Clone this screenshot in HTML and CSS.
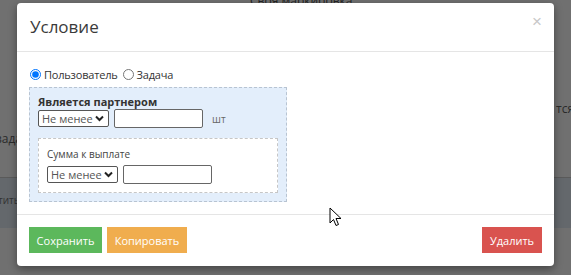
FILE: index.html
```html
<!DOCTYPE html>
<html lang="ru">
<head>
  <meta charset="UTF-8">
  <title>Условие</title>
  <link rel="stylesheet" href="styles.css">
</head>
<body>
  <!-- page behind the modal -->
  <div class="backdrop">
    <div class="bg-top">Своя маркировка</div>
    <div class="bg-left">задач</div>
    <div class="bg-right">тся</div>
    <div class="bg-row"><span>тить</span></div>
  </div>

  <div class="modal">
    <div class="modal-header">
      <h2>Условие</h2>
      <button class="close-button">×</button>
    </div>

    <div class="modal-body">
      <div class="type-switch">
        <label><input type="radio" name="type" checked> Пользователь</label>
        <label><input type="radio" name="type"> Задача</label>
      </div>

      <div class="condition-box">
        <div class="condition-title">Является партнером</div>
        <div class="condition-row">
          <select><option>Не менее</option></select>
          <input type="text">
          <span class="unit">шт</span>
        </div>

        <div class="sub-condition">
          <div class="sub-title">Сумма к выплате</div>
          <div class="condition-row">
            <select><option>Не менее</option></select>
            <input type="text">
          </div>
        </div>
      </div>
    </div>

    <div class="modal-footer">
      <button class="btn btn-save">Сохранить</button>
      <button class="btn btn-copy">Копировать</button>
      <button class="btn btn-delete">Удалить</button>
    </div>
  </div>

  <svg class="cursor" width="13" height="20" viewBox="0 0 13 20">
    <path d="M1 1 L1 16 L4.5 12.5 L7 18.5 L9.5 17.5 L7 11.5 L12 11.5 Z" fill="#fff" stroke="#000" stroke-width="1"/>
  </svg>
</body>
</html>
```

FILE: styles.css
```css
body {
  margin: 0;
  padding: 0;
  font-family: "Open Sans", Arial, sans-serif;
  color: #333;
  background: #6e6e6e;
  height: 275px;
  overflow: hidden;
  position: relative;
}

.backdrop {
  position: absolute;
  top: 0;
  left: 0;
  width: 571px;
  height: 275px;
  background: #707070;
}

.bg-top {
  position: absolute;
  top: -8px;
  left: 250px;
  font-size: 12px;
  color: #222;
}

.bg-left {
  position: absolute;
  top: 130px;
  left: -4px;
  font-size: 12px;
  color: #2a2a2a;
}

.bg-right {
  position: absolute;
  top: 100px;
  left: 556px;
  font-size: 12px;
  color: #2a2a2a;
}

.bg-row {
  position: absolute;
  top: 177px;
  left: 0;
  width: 571px;
  height: 50px;
  background: #64686c;
  border-top: 1px solid #5a5a5a;
}

.bg-row span {
  position: absolute;
  top: 15px;
  left: -2px;
  font-size: 10px;
  color: #333;
}

.modal {
  position: absolute;
  top: 3px;
  left: 17px;
  width: 537px;
  height: 263px;
  background: #fff;
  border-radius: 4px;
  box-shadow: 0 3px 9px rgba(0, 0, 0, 0.4);
  display: flex;
  flex-direction: column;
}

.modal-header {
  display: flex;
  justify-content: space-between;
  align-items: flex-start;
  height: 48px;
  padding: 0 12px 0 13px;
  border-bottom: 1px solid #e5e5e5;
}

.modal-header h2 {
  margin: 12px 0 0;
  font-size: 17px;
  font-weight: 400;
  color: #3a3a3a;
}

.close-button {
  margin-top: 9px;
  padding: 0;
  background: none;
  border: none;
  font-size: 17px;
  color: #c8c8c8;
  cursor: pointer;
}

.modal-body {
  flex: 1;
  padding: 11px 12px 0;
}

.type-switch {
  display: flex;
  gap: 4px;
  font-size: 11px;
  letter-spacing: -0.2px;
  height: 23px;
  align-items: center;
}

.type-switch label {
  display: flex;
  align-items: center;
}

.type-switch input {
  margin: 0 3px 0 1px;
  width: 11px;
  height: 11px;
}

.condition-box {
  margin-top: 1px;
  width: 240px;
  padding: 6px 8px 8px;
  background: #e3eefb;
  border: 1px dashed #b8c4d2;
}

.condition-title {
  font-size: 11px;
  font-weight: 700;
  color: #333;
}

.condition-row {
  display: flex;
  align-items: center;
  gap: 5px;
}

.condition-row select {
  appearance: none;
  -webkit-appearance: none;
  width: 71px;
  height: 17px;
  font-family: inherit;
  font-size: 11px;
  line-height: 15px;
  color: #555;
  border: 1px solid #555;
  border-radius: 2px;
  padding: 0 0 0 3px;
  background: #fff url("data:image/svg+xml,%3Csvg xmlns='http://www.w3.org/2000/svg' width='9' height='7' viewBox='0 0 9 7'%3E%3Cpath d='M1 1.5 L4.5 5 L8 1.5' fill='none' stroke='%23222' stroke-width='2'/%3E%3C/svg%3E") no-repeat right 4px center;
}

.condition-row input {
  width: 85px;
  height: 15px;
  padding: 1px;
  border: 1px solid #666;
  border-radius: 2px;
}

.unit {
  margin-left: 4px;
  font-size: 10px;
  color: #666;
}

.sub-condition {
  margin-top: 10px;
  padding: 8px 8px 8px;
  background: #fff;
  border: 1px dashed #c6c6c6;
}

.sub-title {
  font-size: 10px;
  color: #444;
  margin-bottom: 4px;
}

.modal-footer {
  display: flex;
  gap: 5px;
  padding: 12px 12px 13px;
  border-top: 1px solid #e5e5e5;
}

.btn {
  height: 26px;
  padding: 0 6px;
  border: none;
  border-radius: 0;
  font-family: inherit;
  font-size: 11px;
  color: #fff;
  cursor: pointer;
}

.btn-save {
  width: 73px;
  background: #5cb85c;
}

.btn-copy {
  width: 80px;
  background: #f0ad4e;
}

.btn-delete {
  width: 60px;
  margin-left: auto;
  background: #d9534f;
}

.cursor {
  position: absolute;
  top: 207px;
  left: 329px;
}
```
